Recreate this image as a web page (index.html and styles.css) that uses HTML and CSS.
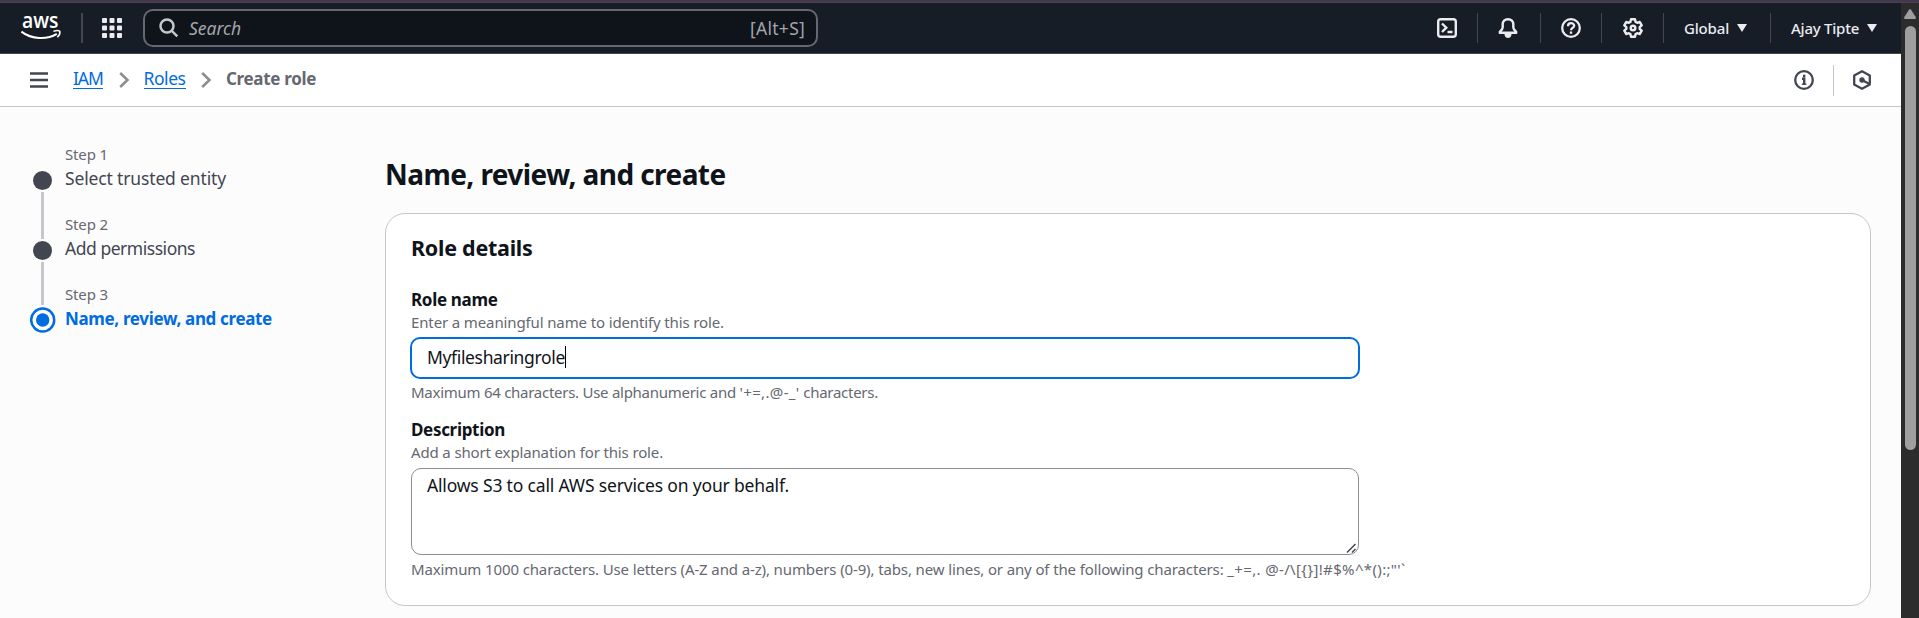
FILE: index.html
```html
<!DOCTYPE html>
<html lang="en">
<head>
<meta charset="utf-8">
<title>Create role | IAM | Global</title>
<link rel="stylesheet" href="styles.css">
</head>
<body>
<div class="strip"></div>
<div class="window">
  <div class="page">
    <header class="topnav">
      <svg class="logo" width="42" height="34" viewBox="0 -4 42 34" aria-label="aws">
        <text class="logo-text" x="1" y="15" textLength="36.5" lengthAdjust="spacingAndGlyphs">aws</text>
        <path d="M0.4 18.600C10.500 26.500 26 27 35.800 20.900" fill="none" stroke="#fff" stroke-width="2"/>
        <path d="M32.400 18.400C35 17.400 38 17.400 38.800 18.300C39.200 20 38 22.700 36.300 24.300" fill="none" stroke="#fff" stroke-width="1.500"/>
      </svg>
      <span class="divider thick"></span>
      <svg class="apps" width="20" height="20" viewBox="0 0 20 20" fill="#ebebf0">
        <rect width="5" height="5" rx="1"/><rect x="7.500" width="5" height="5" rx="1"/><rect x="15" width="5" height="5" rx="1"/>
        <rect y="7.500" width="5" height="5" rx="1"/><rect x="7.500" y="7.500" width="5" height="5" rx="1"/><rect x="15" y="7.500" width="5" height="5" rx="1"/>
        <rect y="15" width="5" height="5" rx="1"/><rect x="7.500" y="15" width="5" height="5" rx="1"/><rect x="15" y="15" width="5" height="5" rx="1"/>
      </svg>
      <div class="search">
        <svg width="20" height="20" viewBox="0 0 20 20" fill="none" stroke="#c6c6cd" stroke-width="2.500"><circle cx="8" cy="8" r="6.500"/><path d="M12.800 12.800L18.300 18.300"/></svg>
        <span class="search-text">Search</span>
        <span class="shortcut">[Alt+S]</span>
      </div>
      <nav class="tools">
        <a class="tool shell"><svg width="20" height="20" viewBox="0 0 20 20" fill="none" stroke="#ebebf0" stroke-width="2.400"><rect x="1.200" y="1.200" width="17.600" height="17.600" rx="2.500"/><path d="M5 5.500L9.300 9.700L5 14M10.500 14H15.500"/></svg></a>
        <a class="tool bell"><svg width="20" height="20" viewBox="0 0 20 20"><path d="M10 1.200C6.700 1.200 4.700 3.400 4.700 6.300V9.500C4.700 11 3.200 12.400 1.800 13.800V14.800H18.200V13.800C16.800 12.400 15.300 11 15.300 9.500V6.300C15.300 3.400 13.300 1.200 10 1.200Z" fill="none" stroke="#ebebf0" stroke-width="2.400" stroke-linejoin="round"/><path d="M6.500 16H13.500C13.500 18.500 12 20 10 20S6.500 18.500 6.500 16Z" fill="#ebebf0"/></svg></a>
        <a class="tool help"><svg width="20" height="20" viewBox="0 0 20 20" fill="none" stroke="#ebebf0" stroke-width="2.300"><circle cx="10" cy="10" r="8.800"/><path d="M7 8.200C7 4.200 13.200 4.400 13.200 7.700C13.200 9.800 10 9.700 10 12.300"/><path d="M10 13.500V15.800"/></svg></a>
        <a class="tool gear"><svg width="20" height="20" viewBox="0 0 20 20" fill="none" stroke="#ebebf0" stroke-width="2.400" stroke-linejoin="round"><path d="M8 1.200H12L12.600 3.900L14.200 4.800L16.700 3.900L18.700 7.300L16.700 9.100V10.900L18.700 12.700L16.700 16.100L14.200 15.200L12.600 16.100L12 18.800H8L7.400 16.100L5.800 15.200L3.300 16.100L1.300 12.700L3.300 10.900V9.100L1.300 7.300L3.300 3.900L5.800 4.800L7.400 3.900Z"/><circle cx="10" cy="10" r="2.300"/></svg></a>
        <a class="tool region"><span>Global</span><svg width="10" height="8" viewBox="0 0 10 8"><path d="M0 0H10L5 8Z" fill="#ebebf0"/></svg></a>
        <a class="tool account"><span>Ajay Tipte</span><svg width="10" height="8" viewBox="0 0 10 8"><path d="M0 0H10L5 8Z" fill="#ebebf0"/></svg></a>
      </nav>
    </header>

    <div class="crumbbar">
      <svg class="menu" width="18" height="16" viewBox="0 0 18 16" stroke="#424650" stroke-width="2.300"><path d="M0 1.500H18M0 8H18M0 14.500H18"/></svg>
      <a class="crumb iam">IAM</a>
      <svg class="chev" width="11" height="16" viewBox="0 0 11 16" fill="none" stroke="#8c8c94" stroke-width="2.500"><path d="M1.200 1L8.500 8L1.200 15"/></svg>
      <a class="crumb roles">Roles</a>
      <svg class="chev" width="11" height="16" viewBox="0 0 11 16" fill="none" stroke="#8c8c94" stroke-width="2.500"><path d="M1.200 1L8.500 8L1.200 15"/></svg>
      <span class="current">Create role</span>
      <div class="panel-icons">
        <svg width="20" height="20" viewBox="0 0 20 20" fill="none" stroke="#424650" stroke-width="2.300"><circle cx="10" cy="10" r="8.800"/><path d="M8 8.700H10.200V14.800M10.200 4.800V7.200" stroke-width="2.400"/><path d="M7.800 14.200H12.400" stroke-width="1.400"/></svg>
        <span class="light-divider"></span>
        <svg width="20" height="20" viewBox="0 0 20 20" fill="none" stroke="#424650" stroke-width="2.300"><path d="M10 1.200L17.800 5.600V14.400L10 18.800L2.200 14.400V5.600Z" stroke-linejoin="round"/><circle cx="10" cy="10" r="2.700" fill="#424650" stroke="none"/><path d="M10 10L17 13.800"/></svg>
      </div>
    </div>

    <div class="content">
      <ol class="steps">
        <li class="step"><div class="rail"><i class="dot"></i><i class="line"></i></div><div><div class="step-no">Step 1</div><div class="step-title select">Select trusted entity</div></div></li>
        <li class="step"><div class="rail"><i class="dot"></i><i class="line last"></i></div><div><div class="step-no">Step 2</div><div class="step-title add">Add permissions</div></div></li>
        <li class="step"><div class="rail"><svg class="ring" width="26" height="26" viewBox="0 0 26 26"><circle cx="12.700" cy="13" r="11.500" fill="#fff" stroke="#006ce0" stroke-width="2.500"/><circle cx="12.700" cy="13" r="6.700" fill="#006ce0"/></svg></div><div><div class="step-no">Step 3</div><div class="step-title active">Name, review, and create</div></div></li>
      </ol>
      <main class="main">
        <h1>Name, review, and create</h1>
        <section class="card">
          <h2>Role details</h2>
          <div class="label">Role name</div>
          <div class="hint h1t">Enter a meaningful name to identify this role.</div>
          <div class="input"><span>Myfilesharingrole</span><i class="caret"></i></div>
          <div class="hint h2t">Maximum 64 characters. Use alphanumeric and <span class="symbols">'+=,.@-_'</span> characters.</div>
          <div class="label second">Description</div>
          <div class="hint h3t">Add a short explanation for this role.</div>
          <div class="textarea">Allows S3 to call AWS services on your behalf.
            <svg class="grip" width="11" height="11" viewBox="0 0 11 11" stroke="#424650" stroke-width="1.500"><path d="M1 9.500L9.500 1M6 9.500L9.500 6"/></svg>
          </div>
          <div class="hint h4t">Maximum 1000 characters. Use letters (A-Z and a-z), numbers (0-9), tabs, new lines, or any of the following characters: <span class="symbols">_+=,. @-/\[{}]!#$%^*():;"'`</span></div>
        </section>
      </main>
    </div>
  </div>
  <div class="scrollbar">
    <svg width="12" height="10" viewBox="0 0 12 10"><path d="M5 0.700Q6 -0.500 7 0.700L11.700 8Q12.300 10 11 10H1Q-0.300 10 0.300 8Z" fill="#9f9f9f"/></svg>
    <div class="thumb"></div>
  </div>
</div>
</body>
</html>
```
FILE: styles.css
```css
* { box-sizing: border-box; }
body {
  margin: 0;
  height: 618px;
  overflow: hidden;
  font-family: "Noto Sans", "Open Sans", sans-serif;
  font-size: 17.5px;
  color: #0f141a;
  background: #fcfcfd;
}
h1, h2, ol { margin: 0; padding: 0; }
svg { display: block; flex: none; }
.strip { height: 3px; background: #43384e; border-bottom: 1px solid #4a4250; }
.window { display: flex; height: 615px; }
.page { width: 1901px; }

/* top navigation */
.topnav {
  display: flex;
  align-items: flex-start;
  height: 51px;
  background: #161d26;
  border-bottom: 1px solid #424650;
}
.logo { margin: 6px 0 0 21px; overflow: visible; }
.logo-text { font-family: "Open Sans", sans-serif; font-size: 22px; font-weight: 600; fill: #fff; }
.divider { width: 2px; height: 30px; margin: 10px 0 0 18px; background: #424650; }
.apps { margin: 15px 0 0 19px; }
.search {
  display: flex;
  align-items: center;
  width: 675px;
  height: 38px;
  margin: 6px 0 0 21px;
  padding: 0 11px 0 14px;
  border: 2px solid #656871;
  border-radius: 10px;
  background: #0f141a;
}
.search-text { margin: -1px 0 0 10px; font-style: italic; color: #a4a4ad; line-height: 24px; }
.shortcut { margin: -1px 0 0 auto; color: #a4a4ad; letter-spacing: 0.25px; line-height: 24px; }
.tools { display: flex; margin-left: auto; padding-top: 10px; }
.tool {
  display: flex;
  align-items: center;
  height: 30px;
  border-left: 1px solid #424650;
  font-size: 15px;
  font-weight: 500;
  color: #ebebf0;
}
.shell { width: 40px; border: 0; }
.bell { width: 63px; padding-left: 20px; }
.help { width: 61px; padding-left: 20px; }
.gear { width: 62px; padding-left: 21px; }
.region { width: 107px; padding-left: 20px; gap: 8px; letter-spacing: -0.17px; }
.account { width: 131px; padding-left: 20px; gap: 8px; letter-spacing: -0.24px; }

/* breadcrumbs */
.crumbbar {
  display: flex;
  align-items: center;
  height: 53px;
  padding-left: 30px;
  background: #fff;
  border-bottom: 1px solid #c6c6cd;
}
.crumb { height: 21px; line-height: 21px; color: #006ce0; border-bottom: 1px solid #006ce0; margin-top: -3px; }
.iam { width: 30px; margin-left: 25px; letter-spacing: -1.1px; }
.roles { width: 42px; letter-spacing: -0.45px; }
.chev { margin: 0 14px 0 15.5px; }
.current { font-size: 17px; font-weight: 700; letter-spacing: -0.32px; color: #656871; line-height: 24px; margin-top: -2px; }
.panel-icons { display: flex; align-items: center; margin: 0 29px 0 auto; }
.light-divider { width: 1px; height: 31px; margin: 0 18px 0 19px; background: #c6c6cd; }

/* wizard steps */
.content { display: flex; height: 511px; }
.steps { width: 385px; padding: 37px 0 0 29px; list-style: none; }
.step { display: flex; height: 70px; }
.rail { display: flex; flex-direction: column; align-items: center; width: 27px; margin-right: 9px; padding-top: 27px; }
.dot { flex: none; width: 19px; height: 19px; border-radius: 50%; background: #424650; }
.line { flex: none; width: 3px; height: 47px; margin-top: 2px; background: #c6c6cd; }
.last { height: 43px; }
.ring { margin-top: -4px; }
.step-no { height: 22px; font-size: 15px; line-height: 20px; letter-spacing: -0.15px; color: #656871; }
.step-title { line-height: 25px; color: #424650; white-space: nowrap; }
.select { letter-spacing: -0.15px; }
.add { letter-spacing: -0.47px; }
.active { font-size: 17px; font-weight: 700; letter-spacing: -0.34px; color: #006ce0; }

/* role form */
.main { width: 1486px; padding-top: 49px; }
h1 { height: 57px; font-size: 28px; line-height: 36px; letter-spacing: -0.57px; }
.card {
  height: 393px;
  padding: 20px 25px 0;
  border: 1px solid #c6c6cd;
  border-radius: 20px;
  background: #fff;
}
h2 { height: 53px; font-size: 21.500px; line-height: 28px; letter-spacing: -0.26px; }
.label { height: 25px; font-size: 17px; font-weight: 700; line-height: 25px; letter-spacing: -0.32px; }
.second { margin-top: 15px; }
.hint { height: 20px; font-size: 15px; line-height: 20px; color: #656871; white-space: nowrap; }
.h1t { letter-spacing: -0.128px; }
.h2t { letter-spacing: -0.27px; }
.h3t { letter-spacing: -0.142px; }
.h4t { letter-spacing: -0.126px; }
.symbols { letter-spacing: 0.35px; }
.input {
  display: flex;
  align-items: center;
  width: 950px;
  height: 42px;
  margin: 5px 0 3px -1px;
  padding: 0 15px 2px;
  border: 2px solid #006ce0;
  border-radius: 10px;
  letter-spacing: -0.35px;
}
.caret { width: 1px; height: 22px; background: #000; }
.textarea {
  position: relative;
  width: 948px;
  height: 87px;
  margin: 6px 0 4px;
  padding: 4px 15px;
  border: 1px solid #8c8c94;
  border-radius: 10px;
  line-height: 25px;
  letter-spacing: -0.17px;
}
.grip { position: absolute; right: 1px; bottom: 0; }

/* window scrollbar */
.scrollbar { display: flex; flex-direction: column; align-items: center; width: 18px; padding-top: 6px; background: #2c2c2c; }
.thumb { width: 11px; height: 424px; margin-top: 7px; border-radius: 6px; background: #9f9f9f; }
```
